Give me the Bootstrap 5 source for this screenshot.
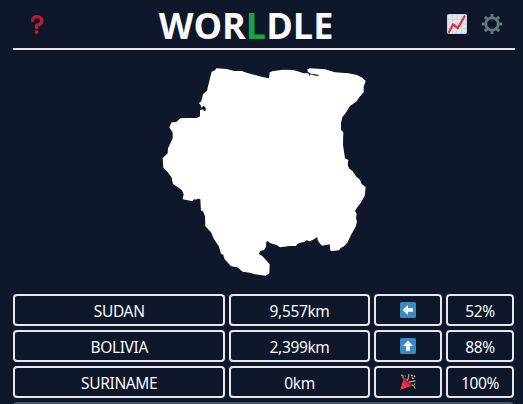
<!DOCTYPE html>
<html lang="en">
<head>
<meta charset="utf-8">
<meta name="viewport" content="width=device-width, initial-scale=1">
<title>Worldle</title>
<link href="https://cdn.jsdelivr.net/npm/bootstrap@5.3.0/dist/css/bootstrap.min.css" rel="stylesheet">
<style>
body{background:#0f172a;color:#f8fafc;font-family:"Noto Sans","Open Sans",sans-serif;font-size:15.5px;height:404px}
.game{width:502px;height:404px;margin-left:13px}
.topbar{height:50px;border-bottom:2px solid #e5e7eb}
.brand{font:700 36px/48px "Open Sans","Noto Sans",sans-serif;letter-spacing:0;margin:0;padding-top:2px}
.brand span{color:#16a34a}
.side-start{width:100px;padding-top:14px}
.side-end{width:136px;gap:15px;padding-right:13px}
.icon-help{margin-left:17px}
.country{height:244px;padding:10px 0 0 2px}
.guesses{display:grid;width:501px;grid-template-columns:repeat(7,minmax(0,1fr));gap:4px}
.guess{height:32px;border:2px solid #e5e7eb;border-radius:4px;line-height:28px;letter-spacing:-.35px;padding:2px 0 0}
.span3{grid-column:span 3}
.span2{grid-column:span 2}
.guess svg{margin-top:-3px}
.slot{grid-column:span 7;height:32px;background:#475569;border-radius:4px}
</style>
<script src="https://cdn.jsdelivr.net/npm/bootstrap@5.3.0/dist/js/bootstrap.bundle.min.js"></script>
</head>
<body class="overflow-hidden">
<main class="game overflow-hidden">
  <header class="topbar d-flex justify-content-between">
    <div class="side-start"><svg class="icon-help d-block" width="14" height="21" viewBox="0 0 14 21"><path d="M2.6 6.4C2.6 3.9 4.6 2.7 6.8 2.7C9.6 2.7 11.8 4.3 11.8 7C11.8 10 9 11 6.6 11.2V13.8" fill="none" stroke="#be1931" stroke-width="3.3" stroke-linecap="round" stroke-linejoin="round"/><circle cx="6.6" cy="18.2" r="1.9" fill="#be1931"/></svg></div>
    <h1 class="brand">WOR<span>L</span>DLE</h1>
    <div class="side-end d-flex justify-content-end align-items-center">
      <svg width="20" height="20" viewBox="0 0 20 20"><rect width="20" height="20" rx="2" fill="#ccd6dd"/><path d="M1 1h18v18H1z" fill="#e1e8ed"/><path d="M5.5 1v18M10 1v18M14.5 1v18M1 5.5h18M1 10h18M1 14.5h18" stroke="#ccd6dd" stroke-width="1"/><path d="M2 18L6 10.5L10.8 14L17.5 2.5" fill="none" stroke="#dd2e44" stroke-width="2.2" stroke-linejoin="round" stroke-linecap="round"/></svg>
      <svg width="20" height="20" viewBox="0 0 20 20"><g stroke="#66757f" stroke-width="3"><path d="M10 0v4M10 16v4M0 10h4M16 10h4M2.9 2.9l3 3M14.1 14.1l3 3M17.1 2.9l-3 3M5.9 14.1l-3 3"/><circle cx="10" cy="10" r="6.2" fill="none" stroke-width="2.8"/></g></svg>
    </div>
  </header>
  <div class="country d-flex justify-content-center">
    <svg width="220" height="220" viewBox="0 0 660 660"><path fill="#fff" d="M170 35L180 31L184 25L215 27L238 33L260 33L280 40L300 45L322 51L342 55L344 37L355 33L385 29L415 30L435 36L445 40L460 40L464 49L466 43L482 47L492 47L490 44L468 41L458 35L457 28L465 25L510 28L540 37L580 40L606 45L622 53L632 63L626 80L626 97L615 109L605 124L585 138L574 156L562 172L558 189L558 210L565 216L564 255L570 295L580 300L578 315L583 326L592 332L604 350L615 359L620 372L632 381L629 408L618 427L605 445L600 453L605 462L603 476L606 482L603 498L588 525L577 548L567 559L557 564L552 571L532 573L526 572L524 553L501 557L494 550L488 541L487 531L473 540L464 544L455 541L448 546L435 548L427 552L423 558L405 558L375 562L366 556L345 549L338 543L334 545L333 560L328 569L316 573L311 582L321 587L330 597L344 613L343 640L332 647L300 643L285 638L263 635L247 622L228 619L209 598L205 585L198 581L191 558L177 538L168 517L151 499L150 469L144 454L138 452L136 417L128 416L122 419L117 417L113 424L83 418L86 402L80 390L68 381L54 372L50 353L38 336L25 323L23 295L38 280L39 265L53 235L53 218L43 202L50 187L64 186L76 175L95 174L125 174L135 169L135 151L144 148L147 154L153 150L151 142L145 137L140 143L137 136L132 129L139 124L144 103L156 92L160 75Z"/></svg>
  </div>
  <section class="guesses text-center">
    <div class="guess span3 d-flex align-items-center justify-content-center">SUDAN</div>
    <div class="guess span2 d-flex align-items-center justify-content-center">9,557km</div>
    <div class="guess d-flex align-items-center justify-content-center"><svg width="16" height="16" viewBox="0 0 16 16"><rect width="16" height="16" rx="1.5" fill="#3b88c3"/><path d="M2.5 8L8 3v3.2h5v3.6H8V13z" fill="#fff"/></svg></div>
    <div class="guess d-flex align-items-center justify-content-center">52%</div>
    <div class="guess span3 d-flex align-items-center justify-content-center">BOLIVIA</div>
    <div class="guess span2 d-flex align-items-center justify-content-center">2,399km</div>
    <div class="guess d-flex align-items-center justify-content-center"><svg width="16" height="16" viewBox="0 0 16 16"><rect width="16" height="16" rx="1.5" fill="#3b88c3"/><path d="M8 2.5L13 8H9.8v5H6.2V8H3z" fill="#fff"/></svg></div>
    <div class="guess d-flex align-items-center justify-content-center">88%</div>
    <div class="guess span3 d-flex align-items-center justify-content-center">SURINAME</div>
    <div class="guess span2 d-flex align-items-center justify-content-center">0km</div>
    <div class="guess d-flex align-items-center justify-content-center"><svg width="16" height="16" viewBox="0 0 16 16"><path d="M.2 15.8L3.8 4C7 4.5 11.6 9 12 12z" fill="#dd2e44"/><path d="M3.8 4C6 3.4 13 9.9 12 12C9.8 12.2 3.4 6.2 3.8 4z" fill="#be1931"/><path d="M2.5 9.5l3.5 4M1.2 13l1.6 1.7" stroke="#ea596e" stroke-width="1"/><g fill="none" stroke-width="1.4"><path d="M1 1.5c2-1 2.5 1 1.8 3" stroke="#77b255"/><path d="M6.8 6.5C9.5 5 8 3 9 .3" stroke="#aa8dd8"/><path d="M9.2 8.5C11 6.3 13.5 8.5 15.5 6.5" stroke="#aa8dd8"/><path d="M12 11.5c3-1 1 2 3.5 2.8" stroke="#77b255"/></g><g fill="#ffcc4d"><circle cx="12" cy="1.5" r=".9"/><circle cx="14.6" cy="2.3" r=".9"/><circle cx="12.8" cy="4.2" r=".9"/><circle cx="14.7" cy="10" r=".7"/></g><circle cx="5.4" cy="2" r=".8" fill="#5c913b"/></svg></div>
    <div class="guess d-flex align-items-center justify-content-center">100%</div>
    <div class="slot"></div>
  </section>
</main>
</body>
</html>
